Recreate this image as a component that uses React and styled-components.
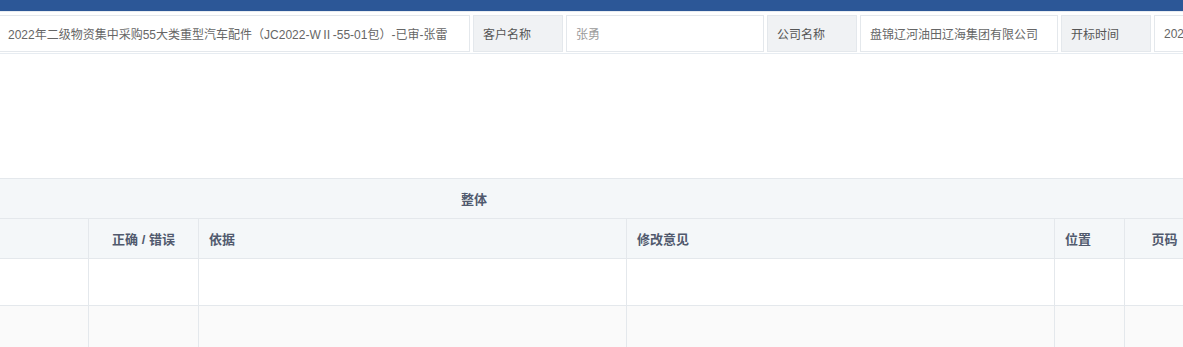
import React from 'react';
import styled, { createGlobalStyle } from 'styled-components';

const GlobalStyle = createGlobalStyle`
  html, body {
    margin: 0;
    padding: 0;
    overflow: hidden;
    background: #fff;
    font-family: "Liberation Sans", "Noto Sans CJK SC", sans-serif;
  }
`;

const Page = styled.div`
  width: 1183px;
  height: 347px;
  overflow: hidden;
`;

const TopBar = styled.div`
  height: 11px;
  background: #2c5797;
`;

const InfoRow = styled.div`
  display: flex;
  gap: 3px;
  width: max-content;
  padding: 3px 0 1px;
  border-top: 1px solid #e7ecf1;
  border-bottom: 1px solid #e7ecf1;
`;

const InfoCell = styled.div`
  box-sizing: border-box;
  height: 37px;
  width: ${p => p.$w}px;
  margin-left: ${p => p.$first ? '-1px' : '0'};
  padding: 0 9px 0 ${p => p.$first ? 8 : 9}px;
  display: flex;
  align-items: center;
  border: 1px solid #e4e8ec;
  background: ${p => p.$label ? '#f0f2f4' : '#fff'};
  color: ${p => p.$muted ? '#9a9a9a' : p.$label ? '#555' : '#666'};
  font-size: 12px;
  white-space: nowrap;
  overflow: hidden;
`;

const Spacer = styled.div`
  height: 124px;
`;

const Table = styled.div`
  display: grid;
  grid-template-columns: 89px 110px 428px 428px 70px 80px;
  width: max-content;
  border-top: 1px solid #e4e8ec;
`;

const GroupCell = styled.div`
  grid-column: 1 / -1;
  box-sizing: border-box;
  height: 40px;
  background: #f4f7f9;
  border-bottom: 1px solid #e4e8ec;
  display: flex;
  align-items: center;
`;

const GroupTitle = styled.span`
  width: 948px;
  text-align: center;
  font-size: 13px;
  font-weight: 700;
  color: #515a6e;
`;

const HeadCell = styled.div`
  box-sizing: border-box;
  height: 40px;
  padding: 0 10px;
  display: flex;
  align-items: center;
  justify-content: ${p => p.$center ? 'center' : 'flex-start'};
  background: #f4f7f9;
  border-right: 1px solid #e4e8ec;
  border-bottom: 1px solid #e4e8ec;
  font-size: 13px;
  font-weight: 700;
  color: #515a6e;
  white-space: pre;
`;

const BodyCell = styled.div`
  box-sizing: border-box;
  height: 47px;
  background: ${p => p.$stripe ? '#fafafa' : '#fff'};
  border-right: 1px solid #e4e8ec;
  border-bottom: 1px solid #e4e8ec;
`;

const info = [
  { w: 471, text: '2022年二级物资集中采购55大类重型汽车配件（JC2022-WⅡ-55-01包）-已审-张雷', first: true },
  { w: 90, text: '客户名称', label: true },
  { w: 198, text: '张勇', muted: true },
  { w: 90, text: '公司名称', label: true },
  { w: 198, text: '盘锦辽河油田辽海集团有限公司' },
  { w: 90, text: '开标时间', label: true },
  { w: 198, text: '2022-09-15 09:00:00' },
];

const heads = [
  { text: '' },
  { text: '正确 / 错误', center: true },
  { text: '依据' },
  { text: '修改意见' },
  { text: '位置' },
  { text: '页码', center: true },
];

export default function App() {
  return (
    <Page>
      <GlobalStyle />
      <TopBar />
      <InfoRow>
        {info.map((c, i) => (
          <InfoCell key={i} $w={c.w} $first={c.first} $label={c.label} $muted={c.muted}>
            {c.text}
          </InfoCell>
        ))}
      </InfoRow>
      <Spacer />
      <Table>
        <GroupCell>
          <GroupTitle>整体</GroupTitle>
        </GroupCell>
        {heads.map((h, i) => (
          <HeadCell key={i} $center={h.center}>{h.text}</HeadCell>
        ))}
        {[0, 1].map(r =>
          heads.map((_, i) => <BodyCell key={`${r}-${i}`} $stripe={r === 1} />)
        )}
      </Table>
    </Page>
  );
}
